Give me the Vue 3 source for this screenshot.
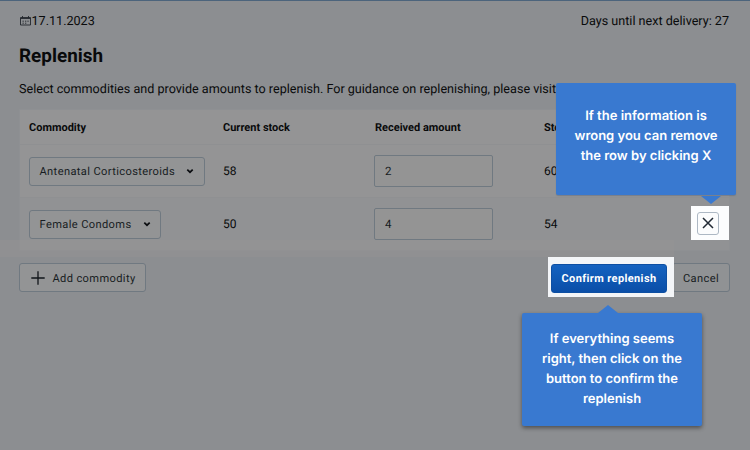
<script setup>
import { ref } from 'vue'

const rows = ref([
  { name: 'Antenatal Corticosteroids', stock: 58, amount: 2, total: 60, active: false },
  { name: 'Female Condoms', stock: 50, amount: 4, total: 54, active: true },
])
</script>

<template>
  <main class="page">
    <div class="topline">
      <span class="date">
        <svg class="calendar" viewBox="0 0 11 10">
          <path d="M.5 1.5h10v7.5H.5zM.5 2.5h10M2.5 0v2M8.5 0v2" />
          <path d="M2.5 5.2h1.3M5 5.2h1.3M7.4 5.2h1.3M2.5 7.2h1.3M5 7.2h1.3" />
        </svg>
        <span class="date-text">17.11.2023</span>
      </span>
      <span class="delivery">Days until next delivery: 27</span>
    </div>
    <h1><span>Replenish</span></h1>
    <p class="intro">Select commodities and provide amounts to replenish. For guidance on replenishing, please visit</p>

    <section class="table">
      <div class="row head">
        <span>Commodity</span>
        <span>Current stock</span>
        <span>Received amount</span>
        <span>Stock</span>
      </div>
      <div v-for="row in rows" :key="row.name" class="row" :class="{ active: row.active }">
        <div>
          <button class="select">
            {{ row.name }}
            <svg class="chevron" viewBox="0 0 8 6"><path d="M1.3 1.6 4 4.2 6.7 1.6" /></svg>
          </button>
        </div>
        <span>{{ row.stock }}</span>
        <input v-model="row.amount" />
        <span>{{ row.total }}</span>
        <div v-if="row.active" class="spot remove-spot">
          <button class="remove">
            <svg viewBox="0 0 12 12"><path d="M1 1l10 10M11 1 1 11" /></svg>
          </button>
        </div>
      </div>
    </section>

    <footer class="actions">
      <button class="add">
        <svg viewBox="0 0 14 14"><path d="M7 .3v13.4M.3 7h13.4" /></svg>
        <span>Add commodity</span>
      </button>
      <div class="spot confirm-spot"><button class="confirm">Confirm replenish</button></div>
      <button class="cancel">Cancel</button>
    </footer>

    <div class="band"></div>
    <aside class="tip tip-remove">If the information is<br />wrong you can remove<br />the row by clicking X</aside>
    <aside class="tip tip-confirm">If everything seems<br />right, then click on the<br />button to confirm the<br />replenish</aside>
  </main>
</template>

<style>
body {
  background: #8c8e91;
}
</style>

<style scoped>
.page {
  position: relative;
  box-sizing: border-box;
  width: 750px;
  height: 450px;
  padding: 0 21px 0 19px;
  border-top: 1px solid #4c647c;
  overflow: hidden;
  background: #8c8e91;
  color: #090a0b;
  font-family: Roboto, sans-serif;
  font-size: 12.6px;
  text-rendering: geometricPrecision;
}
.topline {
  display: flex;
  justify-content: space-between;
  height: 17px;
  padding-top: 12px;
  line-height: 18px;
}
.date {
  display: flex;
  align-items: center;
}
.calendar {
  width: 11px;
  height: 10px;
  margin: 0 0.5px 1px 1px;
}
svg path {
  fill: none;
  stroke: #11151a;
}
.calendar path {
  stroke: #23272c;
  stroke-width: 0.9;
}
h1 {
  margin: 14px 0 0;
  font-size: 18.9px;
  line-height: 24px;
  font-weight: 700;
}
.intro {
  margin: 12px 0 11px;
  padding-top: 1px;
  line-height: 17px;
  white-space: nowrap;
}
.table {
  box-sizing: border-box;
  width: 711px;
  height: 142px;
  border: 1px solid #8e9093;
  background: #949495;
}
.row {
  box-sizing: border-box;
  display: grid;
  grid-template-columns: 194px 152px 169px 146px 38px;
  align-items: center;
  height: 53px;
  padding-left: 9px;
  border-top: 1px solid #8f9092;
  font-size: 12px;
}
.row.active {
  background: #919294;
}
.head {
  height: 34px;
  border-top: 0;
  font-size: 11px;
  font-weight: 700;
}
button,
input {
  box-sizing: border-box;
  margin: 0;
  font-family: inherit;
  color: #171c22;
  text-rendering: inherit;
}
button {
  display: flex;
  align-items: center;
  justify-content: center;
  height: 29px;
  padding: 0 9.5px;
  border: 1px solid #707981;
  border-radius: 3px;
  background: #939495;
  font-size: 11.1px;
  letter-spacing: 0.38px;
  white-space: nowrap;
}
.select {
  width: fit-content;
}
.chevron {
  width: 8px;
  height: 6px;
  margin-left: 11px;
}
.chevron path {
  stroke: #0b0d10;
  stroke-width: 1.7;
}
input {
  width: 119px;
  height: 32px;
  margin-left: -1px;
  padding: 0 10px;
  border: 1px solid #707981;
  border-radius: 2px;
  outline: 0;
  background: #949494;
  font-size: 11.5px;
}
.spot {
  box-sizing: border-box;
  display: flex;
}
.remove-spot {
  width: 38px;
  height: 34px;
  padding: 6px;
  margin-top: -3px;
  margin-left: 1px;
  background: #fcfdfe;
}
.remove {
  width: 22px;
  height: 23px;
  padding: 0;
  border-color: #adb8c4;
  background: #fbfcfd;
}
.remove svg {
  width: 12px;
  height: 12px;
}
.remove path {
  stroke: #212934;
  stroke-width: 1.5;
}
.actions {
  display: flex;
  align-items: center;
  height: 40px;
  margin-top: 6px;
}
.add {
  margin-top: 1px;
  width: 127px;
  padding: 1px 9px 0 11px;
}
.add svg {
  width: 14px;
  height: 14px;
  margin-right: 7px;
}
.add path {
  stroke-width: 1.3;
}
.confirm-spot {
  z-index: 1;
  width: 126px;
  height: 40px;
  margin-left: auto;
  padding: 7px 3px;
  background: #f3f5f8;
}
.confirm {
  width: 116px;
  height: 29px;
  padding: 0;
  border-color: #0d4fa3;
  background: linear-gradient(#1462c0, #0a4ea8);
  color: #fff;
  font-size: 11px;
  font-weight: 700;
}
.cancel {
  width: 58px;
  margin: 1px -1px 0 -2px;
  padding: 1px 0 0;
  background: #909294;
}
.band {
  position: absolute;
  left: 0;
  top: 239px;
  width: 674px;
  height: 17px;
  background: rgba(152, 149, 148, 0.35);
  pointer-events: none;
}
.tip {
  position: absolute;
  z-index: 2;
  box-sizing: border-box;
  width: 180px;
  padding-top: 23px;
  border-radius: 2px;
  background: #3979d0;
  color: #fff;
  font-family: Inter, sans-serif;
  font-size: 13px;
  line-height: 20px;
  font-weight: 600;
  text-align: center;
}
.tip::after {
  content: '';
  position: absolute;
  width: 20px;
  height: 8px;
  background: #3979d0;
}
.tip-remove {
  left: 556px;
  top: 82px;
  height: 112px;
  box-shadow: 0 1px 1px rgba(90, 105, 130, 0.5);
}
.tip-remove::after {
  left: 145px;
  top: 113px;
  clip-path: polygon(0 0, 100% 0, 50% 100%);
}
.tip-confirm {
  left: 522px;
  top: 312px;
  height: 113px;
  padding-top: 16px;
  box-shadow: 0 2px 4px rgba(0, 0, 0, 0.45);
}
.tip-confirm::after {
  left: 76px;
  top: -8px;
  clip-path: polygon(50% 0, 100% 100%, 0 100%);
}
</style>
